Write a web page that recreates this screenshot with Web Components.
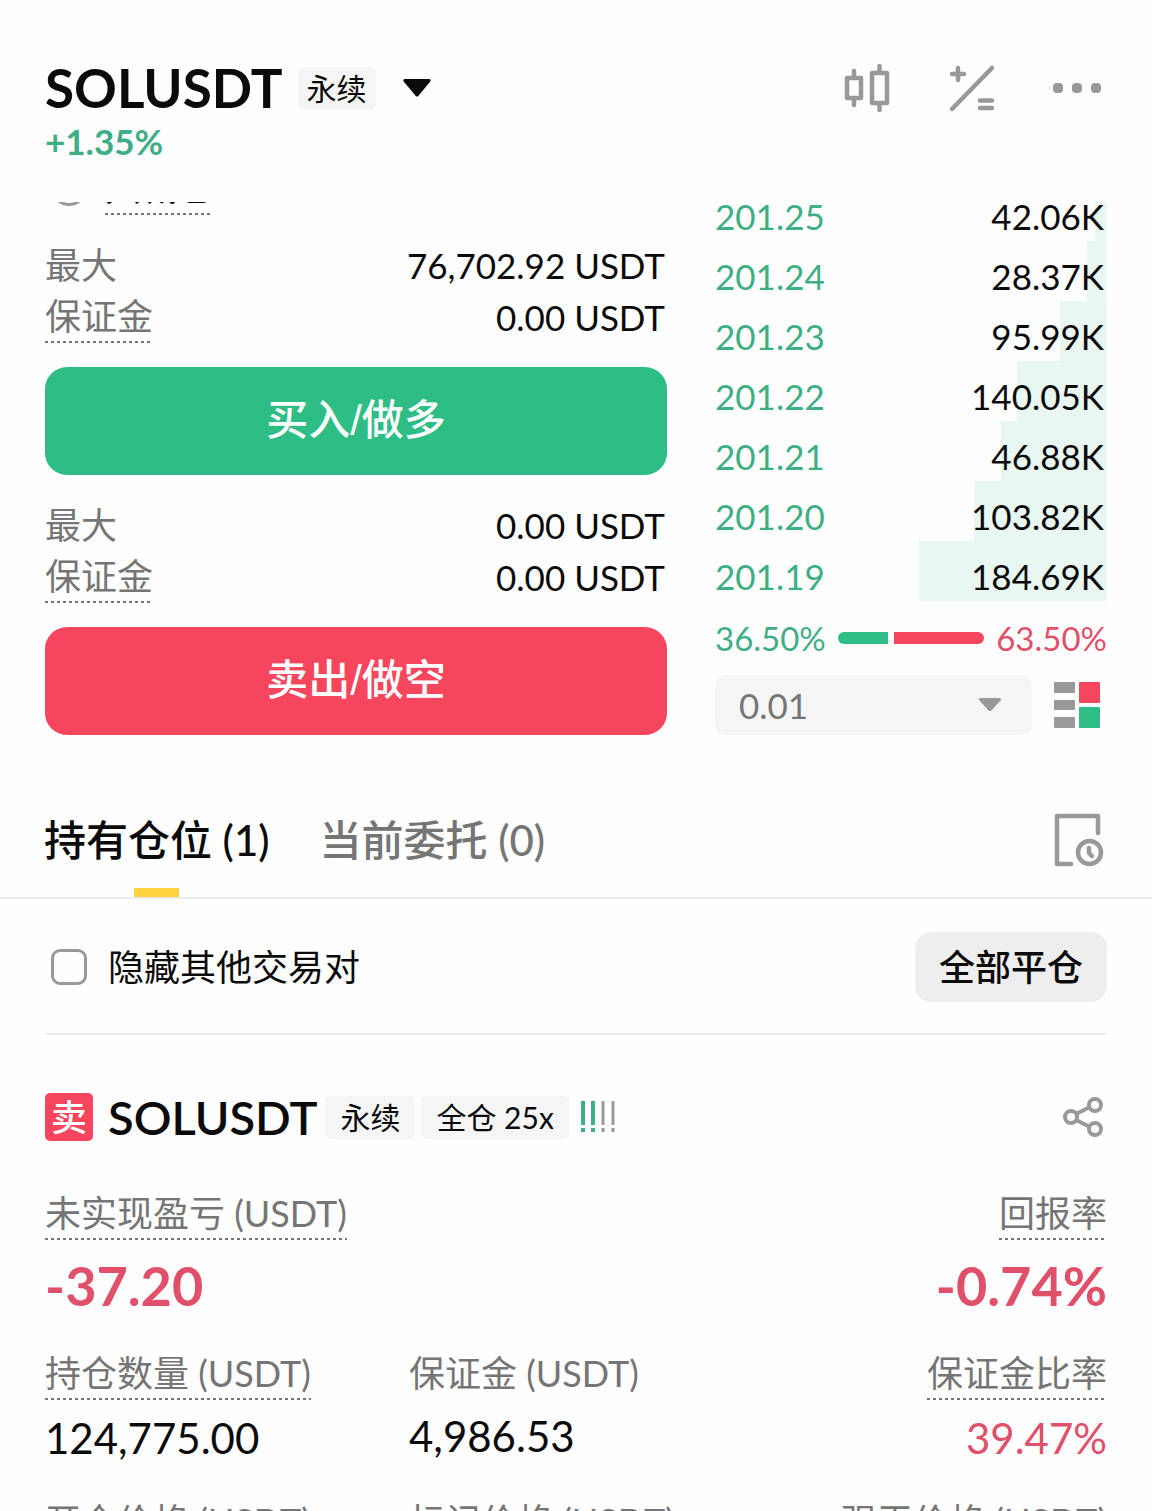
<!DOCTYPE html>
<html lang="zh-CN">
<head>
<meta charset="utf-8">
<meta name="viewport" content="width=device-width, initial-scale=1">
<title>SOLUSDT 永续</title>
<style>
    :root {
        --color-buy: #2ebd85;
        --color-sell: #f6465d;
        --color-up: #3fae85;
        --color-down: #e0506a;
        --color-text: #0b0b0b;
        --color-muted: #757575;
        --color-icon: #999999;
        --color-tag: #f5f5f5;
        --color-line: #ececec;
        --page-gutter: 45px;
    }

    body {
        margin: 0;
        height: 100vh;
        overflow: hidden;
        background: #fefefe;
        color: var(--color-text);
        font-family: Lato, "Noto Sans CJK SC", sans-serif;
        font-size: 36px;
    }
</style>
</head>
<body>
<trade-app></trade-app>

<script>
(() => {
    const define = (name, html, setup) => {
        const template = document.createElement("template")
        template.innerHTML = html

        customElements.define(name, class extends HTMLElement {
            constructor() {
                super()
                const shadow = this.attachShadow({ mode: "open" })
                shadow.append(template.content.cloneNode(true))
            }

            connectedCallback() {
                if (setup) {
                    setup(this, this.shadowRoot)
                }
            }
        })
    }

    // small grey label next to a symbol
    define("trade-tag", `
        <style>
            :host {
                display: block;
                padding: 0 var(--tag-pad, 9px);
                border-radius: 6px;
                background: var(--color-tag);
                font-size: 30px;
                line-height: 43px;
                white-space: nowrap;
            }
        </style>
        <slot></slot>
    `)

    // caption, with a dashed underline when it opens an explanation
    define("trade-term", `
        <style>
            :host {
                display: block;
                width: fit-content;
                color: var(--color-muted);
                font-size: 36px;
                line-height: 50px;
                white-space: nowrap;
            }

            :host([hint]) {
                padding-bottom: 2px;
                background: repeating-linear-gradient(90deg, var(--color-muted) 0 3px, transparent 3px 6px) bottom / 100% 2px no-repeat;
            }
        </style>
        <slot></slot>
    `)

    define("trade-header", `
        <style>
            :host {
                display: flex;
                justify-content: space-between;
                align-items: flex-start;
                padding: 60px var(--page-gutter) 34px;
            }

            .symbol, .actions {
                display: flex;
                align-items: center;
                height: 56px;
            }

            h1 {
                margin: 0 15px 0 0;
                font-size: 53px;
                line-height: 56px;
                font-weight: 700;
            }

            button {
                display: flex;
                padding: 0;
                border: 0;
                background: none;
                color: inherit;
            }

            .arrow {
                margin-left: 27px;
            }

            .actions {
                gap: 56px;
                padding-right: 5px;
                color: var(--color-icon);
            }

            .change {
                padding-bottom: 2px;
                color: var(--color-up);
                font-size: 35px;
                line-height: 50px;
                font-weight: 700;
            }
        </style>
        <div>
            <div class="symbol">
                <h1>SOLUSDT</h1>
                <trade-tag>永续</trade-tag>
                <button class="arrow" aria-label="选择交易对">
                    <svg width="28" height="18" viewBox="0 0 28 18"><path d="M2 0h24c2 0 2 2 1 3L16 16c-1 2-3 2-4 0L1 3C0 2 0 0 2 0z" fill="currentColor"/></svg>
                </button>
            </div>
            <div class="change">+1.35%</div>
        </div>
        <div class="actions">
            <button aria-label="K线">
                <svg width="48" height="50" viewBox="0 0 48 50" fill="none" stroke="currentColor" stroke-width="4.500" stroke-linecap="round" stroke-linejoin="round">
                    <path d="M3 15h14v20H3zM28 10h15v30H28zM10 8v6M10 36v6M35.500 3v6M35.500 41v6"/>
                </svg>
            </button>
            <button aria-label="计算器">
                <svg width="48" height="50" viewBox="0 0 48 50" fill="none" stroke="currentColor" stroke-width="4.500" stroke-linecap="round">
                    <path d="M4 46L44 5M4 11h12M10 5v12M32 37.500h12M32 45h12"/>
                </svg>
            </button>
            <button aria-label="更多">
                <svg width="50" height="50" viewBox="0 0 50 50" fill="currentColor">
                    <rect x="1" y="20" width="10" height="10" rx="4"/>
                    <rect x="20" y="20" width="10" height="10" rx="4"/>
                    <rect x="39" y="20" width="10" height="10" rx="4"/>
                </svg>
            </button>
        </div>
    `)

    define("order-limit", `
        <style>
            :host {
                display: flex;
                justify-content: space-between;
                align-items: center;
                min-height: 52px;
            }

            .value {
                padding-right: 2px;
                font-size: 35px;
                line-height: 52px;
                white-space: nowrap;
            }
        </style>
        <trade-term></trade-term>
        <div class="value"><slot></slot></div>
    `, (host, shadow) => {
        const term = shadow.querySelector("trade-term")
        term.textContent = host.getAttribute("label")
        term.toggleAttribute("hint", host.hasAttribute("hint"))
    })

    define("order-form", `
        <style>
            :host {
                display: flex;
                flex-direction: column;
                gap: 24px;
            }

            /* scrolled under the header, only its lower edge shows */
            .reduce {
                display: flex;
                align-items: flex-end;
                gap: 18px;
                height: 13px;
                padding-left: 6px;
                overflow: hidden;
            }

            .reduce input {
                appearance: none;
                width: 36px;
                height: 36px;
                margin: 0 0 9px;
                border: 3px solid var(--color-icon);
                border-radius: 50%;
            }

            .reduce trade-term {
                padding-bottom: 3px;
                color: var(--color-text);
            }

            .submit {
                padding: 0;
                border: 0;
                border-radius: 22px;
                color: #ffffff;
                font-family: "Liberation Sans", "Noto Sans CJK SC", sans-serif;
                font-size: 42px;
                font-weight: 500;
                line-height: 108px;
            }

            .buy {
                background: var(--color-buy);
            }

            .sell {
                background: var(--color-sell);
            }
        </style>
        <label class="reduce">
            <input type="radio">
            <trade-term hint>只减仓</trade-term>
        </label>
        <div>
            <order-limit label="最大">76,702.92 USDT</order-limit>
            <order-limit label="保证金" hint>0.00 USDT</order-limit>
        </div>
        <button class="submit buy">买入/做多</button>
        <div>
            <order-limit label="最大">0.00 USDT</order-limit>
            <order-limit label="保证金" hint>0.00 USDT</order-limit>
        </div>
        <button class="submit sell">卖出/做空</button>
    `)

    const bids = [
        ["201.25", "42.06K", 3],
        ["201.24", "28.37K", 5],
        ["201.23", "95.99K", 12],
        ["201.22", "140.05K", 23],
        ["201.21", "46.88K", 27],
        ["201.20", "103.82K", 34],
        ["201.19", "184.69K", 48]
    ]

    define("order-book", `
        <style>
            :host {
                display: flex;
                flex-direction: column;
            }

            table {
                width: 100%;
                border-collapse: collapse;
                font-size: 35px;
                line-height: 48px;
            }

            tr {
                background: linear-gradient(#e8f7f1, #e8f7f1) right / var(--depth) 100% no-repeat;
            }

            td {
                padding: 11px 3px 1px 0;
            }

            /* the upper part of this row is already scrolled away */
            tr:first-child td {
                padding: 0 3px 11px 0;
                line-height: 28px;
            }

            td:first-child {
                color: var(--color-up);
            }

            td:last-child {
                text-align: right;
            }

            .ratio {
                display: flex;
                align-items: center;
                gap: 12px;
                font-size: 33px;
                line-height: 74px;
            }

            .up {
                color: var(--color-up);
            }

            .down {
                color: var(--color-down);
            }

            .bar {
                flex: 1;
                display: flex;
                gap: 6px;
                height: 12px;
                border-radius: 6px;
                overflow: hidden;
            }

            .bar i:first-child {
                flex: 36;
                background: var(--color-buy);
            }

            .bar i:last-child {
                flex: 64;
                background: var(--color-sell);
            }

            .tools {
                display: flex;
                align-items: center;
                gap: 22px;
                padding-right: 6px;
            }

            .step {
                flex: 1;
                display: grid;
                align-items: center;
            }

            .step > * {
                grid-area: 1 / 1;
            }

            select {
                appearance: none;
                height: 60px;
                padding: 0 24px;
                border: 0;
                border-radius: 10px;
                background: var(--color-tag);
                color: var(--color-muted);
                font: inherit;
                font-size: 35px;
            }

            .step svg {
                justify-self: end;
                margin-right: 31px;
                pointer-events: none;
            }

            button {
                display: flex;
                padding: 0;
                border: 0;
                background: none;
            }
        </style>
        <table><tbody></tbody></table>
        <div class="ratio">
            <span class="up">36.50%</span>
            <span class="bar"><i></i><i></i></span>
            <span class="down">63.50%</span>
        </div>
        <div class="tools">
            <div class="step">
                <select aria-label="价格精度"><option>0.01</option></select>
                <svg width="22" height="14" viewBox="0 0 22 14"><path d="M1 0h20c1 0 1 1 1 2L12 13h-2L0 2C0 1 0 0 1 0z" fill="#999999"/></svg>
            </div>
            <button aria-label="盘口样式">
                <svg width="47" height="48" viewBox="0 0 47 48" fill="#999999">
                    <rect x="0" y="1" width="21" height="11" rx="1"/>
                    <rect x="0" y="19" width="21" height="10" rx="1"/>
                    <rect x="0" y="36" width="21" height="11" rx="1"/>
                    <rect x="25" y="1" width="21" height="21" rx="1" fill="#f6465d"/>
                    <rect x="25" y="26" width="21" height="21" rx="1" fill="#2ebd85"/>
                </svg>
            </button>
        </div>
    `, (host, shadow) => {
        const body = shadow.querySelector("tbody")
        body.replaceChildren()

        for (const [price, amount, depth] of bids) {
            const row = body.insertRow()
            row.style.setProperty("--depth", depth + "%")
            row.insertCell().textContent = price
            row.insertCell().textContent = amount
        }
    })

    define("position-tabs", `
        <style>
            :host {
                display: flex;
                align-items: center;
                justify-content: space-between;
                margin-top: 48px;
                padding: 0 48px 0 44px;
                border-bottom: 2px solid var(--color-line);
            }

            nav {
                display: flex;
                gap: 50px;
            }

            button {
                display: flex;
                padding: 0;
                border: 0;
                background: none;
                color: var(--color-muted);
                font: inherit;
                font-size: 42px;
                font-weight: 500;
                line-height: 114px;
                white-space: pre;
            }

            button.active {
                background: linear-gradient(#fad33f, #fad33f) bottom / 45px 9px no-repeat;
                color: var(--color-text);
            }
        </style>
        <nav>
            <button class="active">持有仓位 (1)</button>
            <button>当前委托 (0)</button>
        </nav>
        <button aria-label="历史">
            <svg width="50" height="54" viewBox="0 0 50 54" fill="none" stroke="#999999" stroke-width="4.500" stroke-linecap="round" stroke-linejoin="round">
                <path d="M17 51H3V3h41v17"/>
                <circle cx="35.500" cy="39.500" r="11.500"/>
                <path d="M35 35v5l3 3"/>
            </svg>
        </button>
    `)

    define("position-filter", `
        <style>
            :host {
                display: flex;
                align-items: center;
                justify-content: space-between;
                margin: 0 var(--page-gutter);
                padding: 33px 0 31px;
                border-bottom: 2px solid var(--color-line);
            }

            label {
                display: flex;
                align-items: center;
                gap: 21px;
                padding-left: 6px;
                line-height: 50px;
            }

            input {
                appearance: none;
                width: 36px;
                height: 36px;
                margin: 0;
                border: 3px solid var(--color-icon);
                border-radius: 9px;
            }

            button {
                padding: 0 24px;
                border: 0;
                border-radius: 16px;
                background: #eeeeee;
                color: inherit;
                font: inherit;
                font-weight: 500;
                line-height: 70px;
            }
        </style>
        <label><input type="checkbox">隐藏其他交易对</label>
        <button>全部平仓</button>
    `)

    define("position-field", `
        <style>
            :host {
                display: flex;
                flex-direction: column;
                align-items: flex-start;
            }

            :host([end]) {
                align-items: flex-end;
            }

            .value {
                font-size: 42px;
                line-height: 76px;
            }

            :host([large]) .value {
                font-size: 54px;
                line-height: 92px;
                font-weight: 700;
            }

            :host([down]) .value {
                color: var(--color-down);
            }
        </style>
        <trade-term></trade-term>
        <div class="value"><slot></slot></div>
    `, (host, shadow) => {
        const term = shadow.querySelector("trade-term")
        term.textContent = host.getAttribute("label")
        term.toggleAttribute("hint", host.hasAttribute("hint"))
    })

    define("position-card", `
        <style>
            :host {
                display: block;
                padding: 58px var(--page-gutter) 0;
            }

            header {
                display: flex;
                align-items: center;
                height: 48px;
                margin-bottom: 47px;
            }

            .side {
                width: 48px;
                border-radius: 5px;
                background: var(--color-sell);
                color: #ffffff;
                font-weight: 500;
                line-height: 48px;
                text-align: center;
            }

            h2 {
                margin: 0 8px 0 15px;
                font-size: 47px;
                line-height: 48px;
                font-weight: 600;
            }

            trade-tag {
                --tag-pad: 15px;
                margin-right: 6px;
            }

            .risk {
                margin-left: 5px;
            }

            button {
                display: flex;
                margin-left: auto;
                padding: 0 3px 0 0;
                border: 0;
                background: none;
            }

            .row {
                display: flex;
                justify-content: space-between;
            }

            .grid {
                display: grid;
                grid-template-columns: repeat(3, 1fr);
                gap: 20px 30px;
                margin-top: 16px;
            }
        </style>
        <header>
            <div class="side">卖</div>
            <h2>SOLUSDT</h2>
            <trade-tag>永续</trade-tag>
            <trade-tag>全仓 25x</trade-tag>
            <svg class="risk" width="38" height="34" viewBox="0 0 38 34" stroke-width="4">
                <path d="M3 1v24M3 28v4M13 1v24M13 28v4" stroke="#3fae85"/>
                <path d="M23 1v24M23 28v4M33 1v24M33 28v4" stroke="#999999" stroke-width="3"/>
            </svg>
            <button aria-label="分享">
                <svg width="42" height="42" viewBox="0 0 42 42" fill="none" stroke="#999999" stroke-width="4">
                    <circle cx="9" cy="21" r="6"/>
                    <circle cx="33" cy="9" r="6"/>
                    <circle cx="33" cy="33" r="6"/>
                    <path d="M14 18l14-7M14 24l14 7"/>
                </svg>
            </button>
        </header>
        <div class="row">
            <position-field label="未实现盈亏 (USDT)" hint large down>-37.20</position-field>
            <position-field label="回报率" hint large down end>-0.74%</position-field>
        </div>
        <div class="grid">
            <position-field label="持仓数量 (USDT)" hint>124,775.00</position-field>
            <position-field label="保证金 (USDT)">4,986.53</position-field>
            <position-field label="保证金比率" hint down end>39.47%</position-field>
            <position-field label="开仓价格 (USDT)"></position-field>
            <position-field label="标记价格 (USDT)"></position-field>
            <position-field label="强平价格 (USDT)" end></position-field>
        </div>
    `)

    define("trade-app", `
        <style>
            :host {
                display: block;
            }

            .panel {
                display: grid;
                grid-template-columns: 622fr 392fr;
                align-items: start;
                gap: 48px;
                padding: 0 var(--page-gutter);
            }
        </style>
        <trade-header></trade-header>
        <main>
            <div class="panel">
                <order-form></order-form>
                <order-book></order-book>
            </div>
            <position-tabs></position-tabs>
            <position-filter></position-filter>
            <position-card></position-card>
        </main>
    `)
})()
</script>
</body>
</html>
